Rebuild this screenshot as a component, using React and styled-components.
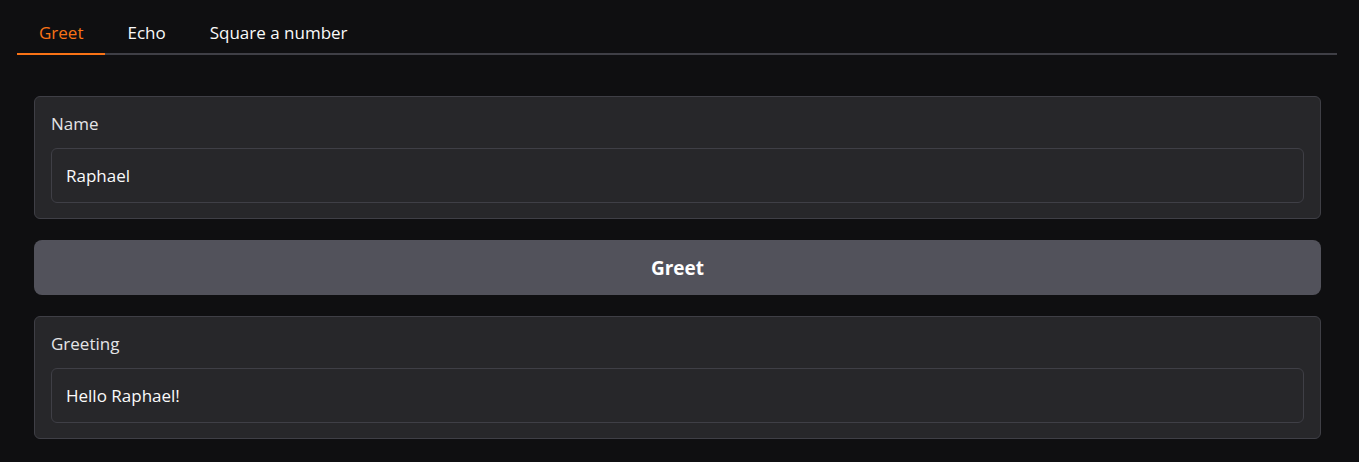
import React, { useState } from 'react';
import styled, { createGlobalStyle } from 'styled-components';

const GlobalStyle = createGlobalStyle`
    html, body {
        margin: 0;
        padding: 0;
        background: #0f0f11;
    }
    body {
        font-family: "Open Sans", "Noto Sans", "Liberation Sans", sans-serif;
        color: #f4f4f5;
    }
`;

const Page = styled.div`
    padding: 16px 22px 0 17px;
`;

const TabBar = styled.div`
    display: flex;
    border-bottom: 2px solid #3f3f46;
`;

const Tab = styled.button`
    background: none;
    border: none;
    margin-bottom: -2px;
    padding: 5px 22px 9px;
    font-family: inherit;
    font-size: 17px;
    line-height: 23px;
    color: ${props => (props.active ? '#f97316' : '#fafafa')};
    border-bottom: 2px solid ${props => (props.active ? '#f97316' : 'transparent')};
    cursor: pointer;
`;

const Panel = styled.div`
    display: flex;
    flex-direction: column;
    gap: 21px;
    padding: 41px 16px 0 17px;
`;

const Block = styled.div`
    background: #27272a;
    border: 1px solid #3f3f46;
    border-radius: 6px;
    padding: 16px 16px 15px;
`;

const Label = styled.div`
    font-size: 17px;
    line-height: 22px;
    color: #e4e4e7;
    margin-bottom: 13px;
`;

const Field = styled.input`
    display: block;
    box-sizing: border-box;
    width: 100%;
    height: 55px;
    padding: 0 14px;
    background: #27272a;
    border: 1px solid #3f3f46;
    border-radius: 6px;
    color: #fafafa;
    font-family: inherit;
    font-size: 17px;
    outline: none;
`;

const Button = styled.button`
    height: 55px;
    border: none;
    border-radius: 8px;
    background: #52525b;
    color: #ffffff;
    font-family: inherit;
    font-size: 19px;
    font-weight: 700;
    cursor: pointer;
`;

const TABS = ['Greet', 'Echo', 'Square a number'];

export default function App() {
    const [tab, setTab] = useState('Greet');
    const [name, setName] = useState('Raphael');
    const [greeting, setGreeting] = useState('Hello Raphael!');

    return (
        <>
            <GlobalStyle />
            <Page>
                <TabBar>
                    {TABS.map(t => (
                        <Tab key={t} active={t === tab} onClick={() => setTab(t)}>{t}</Tab>
                    ))}
                </TabBar>
                <Panel>
                    <Block>
                        <Label>Name</Label>
                        <Field value={name} onChange={e => setName(e.target.value)} />
                    </Block>
                    <Button onClick={() => setGreeting('Hello ' + name + '!')}>Greet</Button>
                    <Block>
                        <Label>Greeting</Label>
                        <Field value={greeting} readOnly />
                    </Block>
                </Panel>
            </Page>
        </>
    );
}
